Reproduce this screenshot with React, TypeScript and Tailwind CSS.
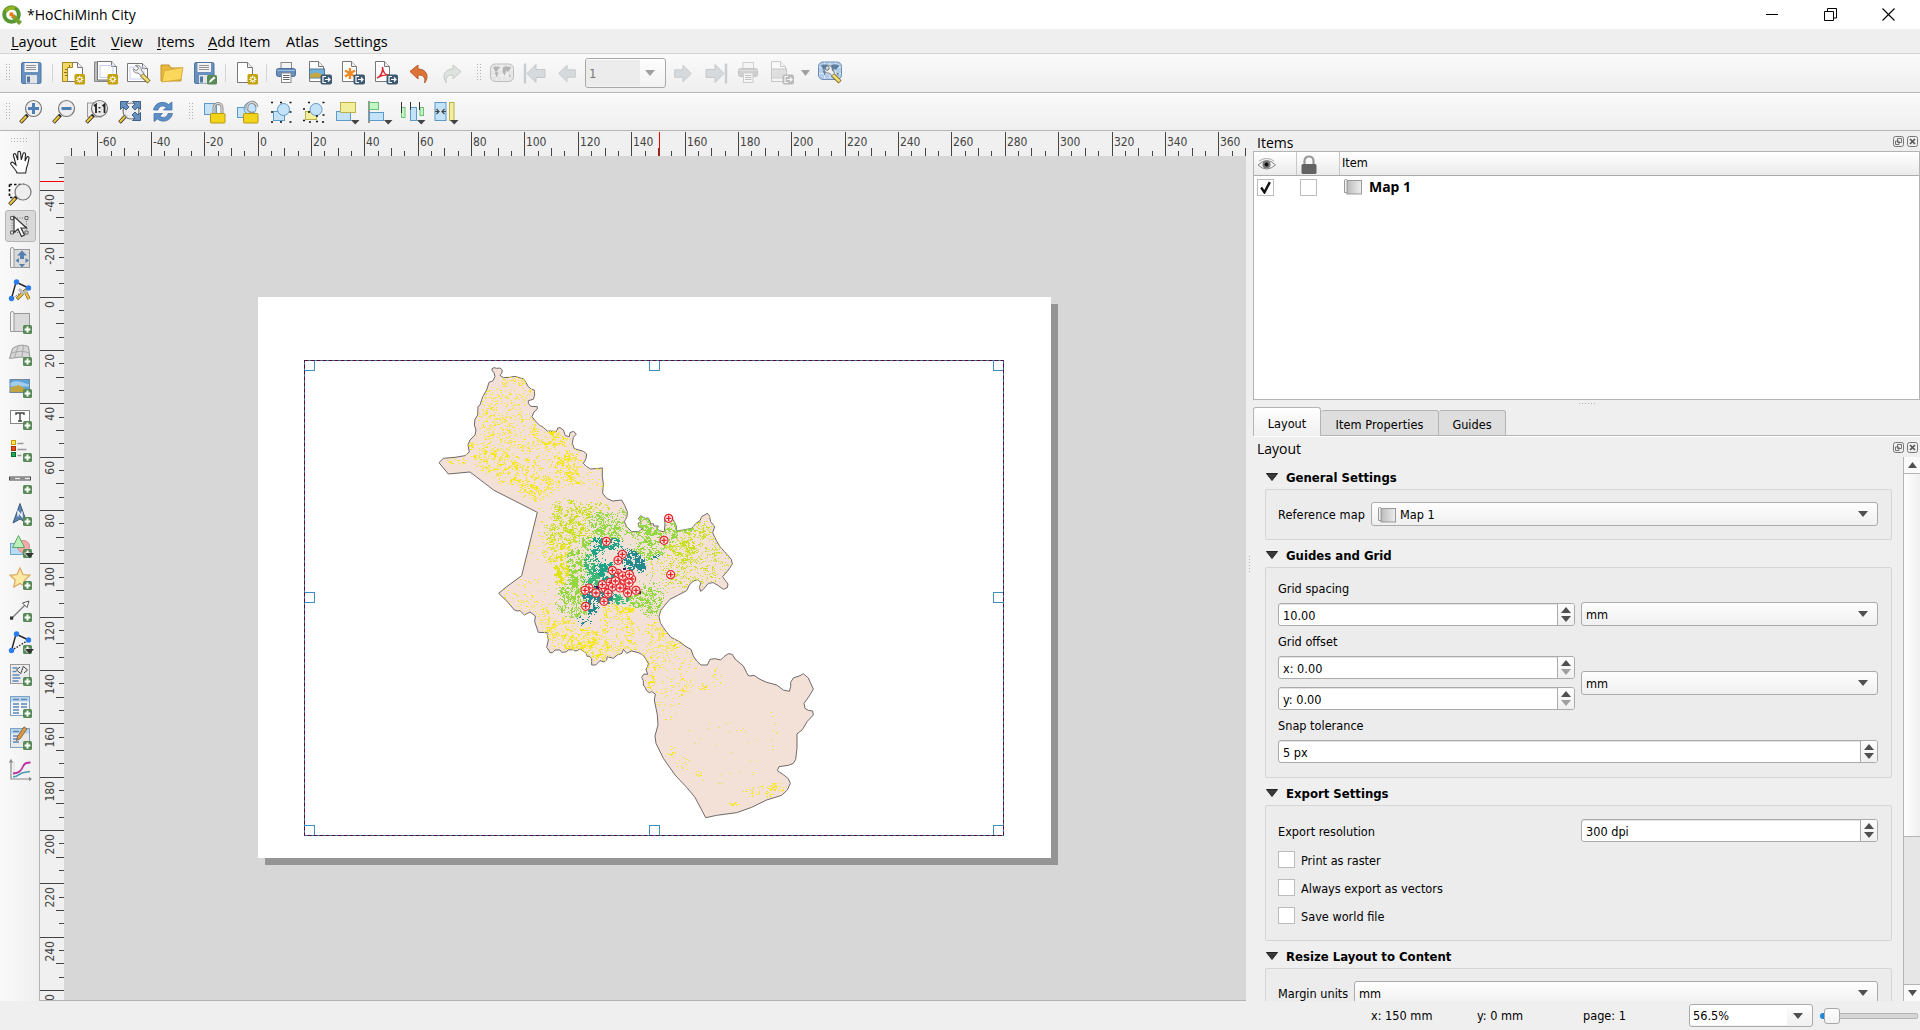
import React from "react";

const UI = "font-['DejaVu_Sans_Condensed','Noto_Sans',sans-serif]";

/* ---------- shared icon pieces ---------- */

function Ico({ children, className = "" }: { children: React.ReactNode; className?: string }) {
  return (
    <svg viewBox="0 0 24 24" className={`h-6 w-6 shrink-0 overflow-visible ${className}`} fill="none">
      {children}
    </svg>
  );
}

const Plus = () => (
  <g>
    <rect x="15" y="15" width="9" height="9" rx="1.6" fill="#578a57" />
    <path d="M19.5 16.6v5.8M16.6 19.5h5.8" stroke="#fff" strokeWidth="2" />
  </g>
);
const PlusDrop = () => (
  <g>
    <Plus />
    <path d="M17 19h9l-4.500 5z" fill="#333" />
  </g>
);
const Star = () => (
  <g>
    <rect x="13.500" y="13" width="10.500" height="10.500" rx="1.500" fill="#c4a20a" />
    <path d="M18.750 14.800v7M15.300 18.300h7M16.300 15.800l5 5M21.300 15.800l-5 5" stroke="#fff" strokeWidth="1.200" />
    <circle cx="18.750" cy="18.300" r="1.300" fill="#c4a20a" />
  </g>
);
const Export = ({ c = "#3c5a72" }: { c?: string }) => (
  <g>
    <rect x="12.500" y="13.500" width="11.500" height="10" rx="2" fill={c} />
    <path d="M18 15.500h-3v6h3M17 18.500h5M20 16.500l2 2-2 2" stroke="#fff" strokeWidth="1.200" />
  </g>
);
const Sheet = ({ x = 1, y = 0.5, w = 14, h = 20, stroke = "#777" }) => (
  <g>
    <path d={`M${x} ${y}h${w - 5}l5 5v${h - 5}h${-w}z`} fill="#fff" stroke={stroke} />
    <path d={`M${x + w - 5} ${y}v5h5`} fill="#eee" stroke={stroke} />
  </g>
);
const Disk = () => (
  <g>
    <rect x="1.500" y="1.500" width="19.500" height="21" rx="1.500" fill="#6790c0" stroke="#5277a0" />
    <rect x="4.500" y="2" width="13.500" height="9" fill="#f2f2f2" />
    <path d="M6 4.500h10M6 6.500h10M6 8.500h10" stroke="#888" strokeWidth=".9" />
    <rect x="6" y="14" width="11" height="8.500" fill="#e4e4e4" />
    <rect x="7" y="15.500" width="3" height="6" fill="#5277a0" />
  </g>
);
const Printer = () => (
  <g>
    <rect x="6" y="1.500" width="10.500" height="7" fill="#f4f4f4" stroke="#888" />
    <rect x="1.500" y="7.500" width="19" height="8" rx="2" fill="#6790c0" stroke="#4f6f94" />
    <path d="M2 9.500h18" stroke="#9bb9da" />
    <rect x="6.500" y="12" width="9.500" height="9.500" fill="#fff" stroke="#888" />
    <path d="M8 14.500h6.500M8 16.500h6.500M8 18.500h6.500" stroke="#666" />
  </g>
);
const Wrench = () => (
  <g>
    <path d="M14.500 13.500L22 21" stroke="#6b5a20" strokeWidth="4.400" />
    <path d="M14.500 13.500L21.600 20.600" stroke="#f0dc6c" strokeWidth="2.800" />
    <path d="M8.500 4.500c2.500-.8 6 .6 5.800 4.500l2.400 3.200-2.700 2.400-3-2.600c-3 .6-5.200-1.800-4.600-4.400l2.600 2 2.300-1.600-.4-2.200z" fill="#eee" stroke="#777" strokeWidth=".9" />
  </g>
);
const Lens = ({ x = 14.5, y = 8.500 }) => (
  <g>
    <path d="M1.500 22.500l7-7.500" stroke="#222" strokeWidth="3.600" />
    <path d="M1.800 22l5.500-5.800" stroke="#f2c83a" strokeWidth="2.200" />
    <circle cx={x} cy={y} r="8" fill="#ececec" fillOpacity=".85" stroke="#777" strokeWidth="1.200" />
  </g>
);
const Scroll = () => (
  <g>
    <rect x="5" y="3.500" width="16.500" height="18" fill="#dadada" stroke="#999" />
    <path d="M2.500 3q0-1.500 1.700-1.500T6 3v18.500H2.500z" fill="#f2f2f2" stroke="#999" />
  </g>
);
const Nodes = ({ dash = false }) => (
  <g>
    <path d="M3.500 20.500L8 4l12.500 6" stroke="#222" strokeWidth="1.400" />
    {dash && <path d="M3.500 20.500L20.500 10" stroke="#222" strokeWidth="1.400" strokeDasharray="1.500 1.500" />}
    <circle cx="3.500" cy="20.500" r="2.700" fill="#2b7bf0" />
    <circle cx="8.500" cy="4" r="2.700" fill="#2b7bf0" />
    <circle cx="20.500" cy="10" r="2.700" fill="#2b7bf0" />
  </g>
);
const World = ({ c = "#b4cdea", land = "#5f7d9f", edge = "#6d8fb5", line = "#e6f0fa" }) => (
  <g>
    <rect x=".5" y="3" width="23" height="17.500" rx="4.500" fill={c} stroke={edge} />
    <path d="M1 8.500h22M1 14.500h22M6.500 3.500v16.500M12 3.500v16.500M17.500 3.500v16.500" stroke={line} strokeWidth=".8" />
    <path d="M3 6.800l2-1.300h3.500l1.500 1-1.700 1.800-.8 1.700-1.500.5 2.300 1.200-.8 2.800-1 2.300-.7-2.600-.8-1.700.7-1.700-1.400-1.800zM12.500 7.300l1.500-1.600 3-.5 4 1-.8 2.200-1.700 1.300-.5 1.800-1.300-1.700-1 .4-.2 1.800-1 2.700-1-2.500-1.300-1.200.5-1.700zM18.700 13.700l1.800.3.500 1.400-1.800.3z" fill={land} />
  </g>
);
const Lock = ({ open = false }) => (
  <g>
    <path d={open ? "M11 9c-1-8 9-9 10-2" : "M11 14V8c0-6 8-6 8 0v6"} stroke="#8b8b8b" strokeWidth="3" />
    <path d={open ? "M11 9c-1-8 9-9 10-2" : "M11 14V8c0-6 8-6 8 0v6"} stroke="#ddd" strokeWidth="1.200" />
    {open && <path d="M11 9c1 3 4 4 7 3" stroke="#999" strokeWidth="1.400" />}
    <rect x="7.500" y="13.500" width="14.500" height="9.500" rx=".8" fill="#f2d41c" stroke="#b79a12" />
  </g>
);
const Drop = () => <path d="M16 20h8.500l-4.250 4.500z" fill="#444" />;

/* ---------- toolbars ---------- */

const fileIcons: React.ReactNode[] = [
  <Disk />,
  "sep",
  <>
    <Sheet x={1.5} y={1.500} w={20} h={19} />
    <path d="M1.500 1.500h10v5h-5v14h-5z" fill="#f3d768" stroke="#a58a22" />
    <path d="M4 8.500h2M3 11.500h3M4 14.500h2M8.500 4v2" stroke="#8d741b" />
    <Star />
  </>,
  <>
    <path d="M.5 1h18v19.500H.5z" fill="#bbb" stroke="#888" />
    <Sheet x={3.5} y={0.500} w={19} h={18.500} />
    <rect x="6" y="4.500" width="13" height="12" stroke="#c5cdf0" />
    <Star />
  </>,
  <>
    <Sheet x={0.5} y={2.500} w={20} h={18} />
    <rect x="3" y="6" width="14" height="12" stroke="#c5cdf0" />
    <Wrench />
  </>,
  <>
    <path d="M1 4h8l2 3h10v13H1z" fill="#e9b93e" stroke="#c0932a" />
    <path d="M2 21l2.500-11.500L23 6.500 21 18.500z" fill="#fbd85c" stroke="#d2a631" strokeWidth=".8" />
  </>,
  <>
    <Disk />
    <rect x="14" y="14" width="10" height="9.500" rx="1.500" fill="#578a57" />
    <path d="M16 22l1-3 4-3.500 1.500 1.500-4 3.500z" fill="#fff" />
  </>,
  "sep",
  <>
    <Sheet x={3.5} y={1.500} w={15} h={20} />
    <Star />
  </>,
  "sep",
  <Printer />,
  <>
    <Sheet x={1.5} y={0.500} w={14} h={20} />
    <rect x="1.500" y="8" width="15" height="9" fill="#6fb0dc" stroke="#56788e" />
    <path d="M2 16.500v-3.500l7-1.500 7 3v2z" fill="#c8a73e" />
    <Export />
  </>,
  <>
    <Sheet x={1.5} y={0.500} w={14} h={20} />
    <path d="M9 7v11M4 9.500l10 6M14 9.500l-10 6" stroke="#ee8a26" strokeWidth="2.400" />
    <Export />
  </>,
  <>
    <Sheet x={1.5} y={0.500} w={14} h={20} />
    <path d="M3 17c4-2 6-6 5.500-11C9 12 12 14 15 14c-4-.5-8 .5-12 3z" stroke="#d8272c" strokeWidth="1.400" />
    <Export />
  </>,
  <path d="M3 10.500L11 4v4c8 0 12 7 6.500 14 1.500-5-1-8.500-6.500-8v4z" fill="#dd7436" stroke="#b9592a" />,
  <path d="M21 10.500L13 4v4C5 8 1 15 6.500 22 5 17 7.500 13.500 13 14v4z" fill="#dfe3e0" stroke="#c4cac6" />,
];

const arrowL = "M3 12.500l9-9v5h9v8h-9v5z";

const zoomIcons: React.ReactNode[] = [
  <>
    <Lens />
    <path d="M14.500 3v11M9 8.500h11" stroke="#4f7fb5" strokeWidth="3" />
  </>,
  <>
    <Lens />
    <path d="M9.500 8.500h10" stroke="#4f7fb5" strokeWidth="3" />
  </>,
  <>
    <rect x="2.500" y="3" width="14" height="14" fill="#eee" stroke="#999" />
    <Lens />
    <path d="M9 6l2-1.500V13M17.500 6l2-1.500V13M14.500 7v1.500M14.500 11v1.500" stroke="#222" strokeWidth="1.800" />
  </>,
  <>
    <Lens x={13} y={11} />
    <path d="M2.500 1.500h8l-2.500 2.500 3 3-3 3-3-3-2.500 2.500zM22.500 1.500h-8l2.500 2.500-3 3 3 3 3-3 2.500 2.500zM22.500 20.500h-8l2.500-2.500-3-3 3-3 3 3 2.500-2.500z" fill="#6790c0" stroke="#3f6185" />
  </>,
  <>
    <path d="M2.500 10C4 2 13 .5 17.500 4.500L21 2v8h-8.500l2.800-2.800C12 5 8 6 7 10z" fill="#5c8ec8" stroke="#3d6ba2" strokeWidth=".7" />
    <path d="M21.500 13.500C20 21.500 11 23 6.500 19L3 21.500v-8h8.500l-2.800 2.800c3.300 2.200 7.300 1.200 8.300-2.800z" fill="#5c8ec8" stroke="#3d6ba2" strokeWidth=".7" />
  </>,
];

const itemIcons: React.ReactNode[] = [
  <>
    <rect x="1.500" y="3.500" width="12" height="11" fill="#c5e3f8" stroke="#5d9ac7" />
    <Lock />
  </>,
  <>
    <rect x="1.500" y="7.500" width="11" height="10" fill="#c5e3f8" stroke="#5d9ac7" />
    <circle cx="14" cy="8.500" r="6" fill="#c5e3f8" stroke="#5d9ac7" />
    <Lock open />
  </>,
  <>
    <rect x="4.500" y="11.500" width="11" height="9" fill="#c5e3f8" stroke="#5d9ac7" />
    <circle cx="14.500" cy="9.500" r="6" fill="#c5e3f8" stroke="#5d9ac7" />
    <path d="M2 2.500h2M11 2.500h2M20.500 2.500h2M2 12h2M20.500 12h2M2 22h2M11 22h2M20.500 22h2" stroke="#111" strokeWidth="1.700" />
  </>,
  <>
    <rect x="3.500" y="11.500" width="11" height="8" fill="#f2ee9c" stroke="#b9b24d" />
    <circle cx="14" cy="9.500" r="6" fill="#c5e3f8" stroke="#5d9ac7" />
    <path d="M6 2.500h2M20.500 2.500h2M1 9h2M6 12h2M20.500 15h2M1 20.500h2M14 16h2M7 22h2M20 22h2M14 21.500h2" stroke="#111" strokeWidth="1.700" />
  </>,
  <>
    <rect x="1.500" y="11.500" width="14" height="9" fill="#c5e3f8" stroke="#5d9ac7" />
    <rect x="5.500" y="2.500" width="15" height="10" fill="#f2ee9c" stroke="#b9b24d" />
    <Drop />
  </>,
  <>
    <path d="M1 1v22" stroke="#333" />
    <rect x="1.500" y="2.500" width="9" height="7" fill="#c4f5c4" stroke="#6dc07a" />
    <rect x="1.500" y="12.500" width="14" height="8" fill="#c5e3f8" stroke="#5d9ac7" />
    <Drop />
  </>,
  <>
    <rect x=".5" y="7.500" width="3.500" height="10" fill="#c4f5c4" stroke="#6dc07a" />
    <rect x="9.500" y="7.500" width="6" height="13" fill="#c5e3f8" stroke="#5d9ac7" />
    <rect x="19" y="7.500" width="3.500" height="8" fill="#c4f5c4" stroke="#6dc07a" />
    <path d="M.5 2v11M9.500 2v8M18.500 2v8" stroke="#333" />
    <Drop />
  </>,
  <>
    <rect x="1" y="2.500" width="11" height="18" fill="#c5e3f8" stroke="#5d9ac7" />
    <rect x="15.500" y="2.500" width="4.500" height="18" fill="#f2ee9c" stroke="#b9b24d" />
    <path d="M1 11.500h3.500M12 11.500h-3.500M2.500 9l2.500 2.500-2.500 2.500M10.500 9L8 11.500l2.500 2.500" stroke="#444" strokeWidth="1.200" />
    <Drop />
  </>,
];

const sideIcons: React.ReactNode[] = [
  <path d="M9 23c-1-3-4-6-6-8.500-1-1.700.8-3 2.200-1.800L8 15 5.500 5.500C5 3.500 7.400 3 8 4.800L9.800 10V2.800c.1-1.900 2.500-1.900 2.700 0l.8 7L15 3.800c.5-1.700 2.700-1.300 2.500.6L17 11l1.700-3.500c.8-1.500 2.700-.7 2.300.9-.8 4.700-1.500 7.200-2.500 9.600l-.8 5z" fill="#fff" stroke="#222" strokeWidth="1.100" />,
  <>
    <path d="M1.500 2.500h15M1.500 2.500v13h10" stroke="#111" strokeWidth="1.700" strokeDasharray="2.500 2" />
    <Lens x={15} y={10} />
  </>,
  <>
    <rect x="4" y="4" width="14.500" height="14.500" stroke="#777" strokeDasharray="1 1.500" />
    <path d="M2.500 2.500h3v3h-3zM17 2.500h3v3h-3zM2.500 17h3v3h-3zM17 17h3v3h-3z" fill="#ddd" stroke="#666" />
    <path d="M6 2.500v16l4-3.500 3.500 7.500 3-1.500-3.500-7h5.500z" fill="#fff" stroke="#333" strokeWidth="1.200" />
  </>,
  <>
    <Scroll />
    <path d="M14 4.500l5 5h-3v3.500h-4V9.500H9zM7.500 14.500l3.500-2.500v5zM21 14.500l-3.500-2.500v5zM11 18h6l-3 3.500z" fill="#5580b0" />
  </>,
  <>
    <Nodes />
    <path d="M5 20l13-9" stroke="#555" strokeDasharray="1.500 1.500" />
    <path d="M9 21l8-8 4 8" stroke="#6b5a20" strokeWidth="3.200" />
    <path d="M9.500 20.500l7.500-7.500 4 8" stroke="#f2c23a" strokeWidth="2" />
    <path d="M11 11l4 4 4-2" stroke="#bbb" strokeWidth="3" />
  </>,
  <>
    <Scroll />
    <Plus />
  </>,
  <>
    <path d="M4.500 6.500Q12 1 20.500 4.500l1.500 12-9-1.500-11.500 1.500z" fill="#d6d6d6" stroke="#999" />
    <path d="M10 4.500l-3.500 11M15.500 3.500l-1.500 11.500M3 11.500q9-4 18.500-.500" stroke="#aaa" />
    <Plus />
  </>,
  <>
    <rect x="2" y="5.500" width="19.500" height="13" fill="#5aa5dd" stroke="#6f8796" />
    <path d="M2.500 9c5-3 8-2 18.500 1.500v2H2.500z" fill="#a4cdea" />
    <path d="M2.500 18V13.500l8-2.500 10.500 6v1z" fill="#c2a53f" />
    <Plus />
  </>,
  <>
    <rect x="2.500" y="4.500" width="19" height="13" fill="#fff" stroke="#888" />
    <path d="M8 9V7h8v2M12 7v8M10 15h4" stroke="#444" strokeWidth="1.400" />
    <Plus />
  </>,
  <>
    <rect x="3.500" y="2.500" width="4" height="4" fill="#fce94f" stroke="#c29b00" />
    <rect x="3.500" y="8.500" width="4" height="4" fill="#e44c1a" stroke="#a73108" />
    <rect x="3.500" y="14.500" width="4" height="4" fill="#26a65b" stroke="#0d6d35" />
    <path d="M9.500 5.500h6M9.500 11.500h9M9.500 17.500h4" stroke="#999" strokeWidth="1.600" />
    <Plus />
  </>,
  <>
    <rect x="1.500" y="7" width="21" height="3" fill="#eee" stroke="#444" />
    <path d="M2 8.500h5M12 8.500h5" stroke="#888" strokeWidth="2" />
    <Plus />
  </>,
  <>
    <path d="M12 1.500L19 21l-7-4-7 4z" fill="#5d83ad" stroke="#3c5a7a" />
    <path d="M10 14.500V9.500l4 5V9.500" stroke="#fff" strokeWidth="1.300" />
    <Plus />
  </>,
  <>
    <rect x="2.500" y="9.500" width="12" height="11" fill="#b9dcf5" stroke="#6ea6cd" />
    <circle cx="15.500" cy="12.500" r="6" fill="#f4aaaa" stroke="#d68484" />
    <path d="M10.500 1.500l6 12h-12z" fill="#b8f2b8" stroke="#5ea367" />
    <PlusDrop />
  </>,
  <>
    <path d="M12 2l3 6.500 7 .8-5.200 4.700 1.400 7L12 17.500 5.800 21l1.400-7L2 9.300l7-.8z" fill="#fbe9a4" stroke="#dba85e" strokeWidth="1.200" />
    <Plus />
  </>,
  <>
    <path d="M4 20L18 6" stroke="#777" strokeWidth="1.300" />
    <path d="M14.500 5l6.500-2-2 6.500z" fill="#fff" stroke="#555" />
    <rect x="2" y="18.500" width="3.200" height="3.200" fill="#333" />
    <Plus />
  </>,
  <>
    <Nodes dash />
    <PlusDrop />
  </>,
  <>
    <rect x="2.500" y="2.500" width="19" height="19" fill="#ececec" stroke="#999" />
    <path d="M4.500 6h5M4.500 9.500h4M4.500 13h7M4.500 16h8M4.500 19h6" stroke="#5b88bb" strokeWidth="1.600" />
    <path d="M12 5L8.500 8l3.500 3M16 5l3.500 3-3.500 3M15.500 4l-3 8" stroke="#444" />
    <Plus />
  </>,
  <>
    <rect x="2.500" y="2.500" width="19" height="19" fill="#f4f4f4" stroke="#7fa3c4" />
    <rect x="3" y="3" width="18" height="4.500" fill="#b7d3ec" />
    <path d="M5 5.500h6M13 5.500h6M5 10h6M13 10h6M5 13h6M13 13h6M5 16h6M5 19h6" stroke="#5b88bb" strokeWidth="1.300" />
    <Plus />
  </>,
  <>
    <rect x="2.500" y="2.500" width="19" height="19" fill="#e9e9e9" stroke="#7fa3c4" />
    <rect x="3" y="3" width="18" height="4.500" fill="#b7d3ec" />
    <path d="M5 5.500h6M5 10h6M5 13h6M5 16h6" stroke="#5b88bb" strokeWidth="1.300" />
    <path d="M8.500 14.500l1-4L16 .8l3 2L12.500 12.500z" fill="#e2963a" stroke="#555" strokeWidth=".7" />
    <Plus />
  </>,
  <>
    <path d="M3 2.500v18.500h20M1.500 4.500L3 2l1.500 2.500M21 19.500l2 1.500-2 1.500" stroke="#888" strokeWidth="1.200" />
    <path d="M6 3.500v16M3 15h18" stroke="#ddd" />
    <path d="M5 15.500c6-.5 8-2.500 10-7 1-3 3-4 7.500-4" stroke="#c0309b" strokeWidth="1.800" />
    <path d="M5 19c6-.5 7-4.500 11-4.500 2 0 3-1 6-1" stroke="#4b9cb5" strokeWidth="1.600" />
  </>,
];

const Slot = ({ children }: { children: React.ReactNode }) => (
  <div className="flex w-[33px] shrink-0 items-center justify-center">
    <Ico>{children}</Ico>
  </div>
);
const Sep = () => (
  <div className="flex w-2 shrink-0 justify-center">
    <div className="h-[18px] w-px bg-[#d4d4d4]" />
  </div>
);
const Grip = ({ horizontal = false }) => (
  <svg className={horizontal ? "h-[5px] w-[18px]" : "h-[18px] w-[5px]"} aria-hidden>
    {Array.from({ length: 6 }, (_, i) =>
      [0, 1].map((j) => (
        <rect key={`${i}${j}`} x={horizontal ? i * 3 : j * 3} y={horizontal ? j * 3 : i * 3} width="1" height="1" fill="#b0b0b0" />
      ))
    )}
  </svg>
);

const barCls = "flex shrink-0 items-center bg-linear-to-b from-[#fafafa] to-[#efefef] border-b border-[#b6b6b6]";

/* ---------- rulers ---------- */

const STEP = 53.37;

function HRuler() {
  const out: React.ReactNode[] = [];
  for (let i = -15; i <= 75; i++) {
    const x = Math.floor(258.1 + (i * STEP) / 4) - 40;
    if (x < 30 || x > 1205) continue;
    const major = i % 4 === 0;
    const mid = i % 2 === 0;
    out.push(<rect key={i} x={x} y={major ? 1 : mid ? 17 : 20} width="1" height={major ? 24 : mid ? 8 : 5} fill="#444" />);
    if (major)
      out.push(
        <text key={`t${i}`} x={x + 2} y="15" fontSize="12" fill="#444" letterSpacing="-.1">
          {i * 5}
        </text>
      );
  }
  return (
    <svg className={`block h-[25px] w-[1206px] shrink-0 bg-[#f0f0f0] ${UI}`}>
      {out}
      <rect x="619" y="1" width="1" height="24" fill="#f00000" />
    </svg>
  );
}

function VRuler() {
  const out: React.ReactNode[] = [];
  for (let i = -10; i <= 52; i++) {
    const y = Math.floor(297.1 + (i * 53.35) / 4) - 156;
    if (y < 0) continue;
    const major = i % 4 === 0;
    const mid = i % 2 === 0;
    out.push(<rect key={i} x={major ? 0 : mid ? 16 : 19} y={y} width={major ? 24 : mid ? 8 : 5} height="1" fill="#444" />);
    if (major)
      out.push(
        <text key={`t${i}`} transform={`translate(14 ${y + 4}) rotate(-90)`} textAnchor="end" fontSize="12" fill="#444">
          {i * 5}
        </text>
      );
  }
  return (
    <svg className={`block h-[844px] w-6 shrink-0 bg-[#f0f0f0] ${UI}`}>
      {out}
      <rect x="0" y="25" width="24" height="1" fill="#f00000" />
    </svg>
  );
}

/* ---------- map: units are thirds of a pixel, origin at (420,350) ---------- */

const outline =
  "216,56 222,53 230,55 240,54 247,60 245,70 240,76 250,83 268,82 285,79 300,84 310,86 318,98 325,110 335,118 343,120 344,135 340,148 325,152 325,160 332,169 352,170 352,177 342,186 336,200 345,212 358,225 370,232 382,243 410,244 413,234 420,233 430,240 436,257 448,260 450,248 460,244 469,252 460,262 457,280 463,296 490,304 500,312 498,326 490,340 500,350 512,357 535,355 547,354 547,380 550,400 548,430 560,445 578,453 605,450 614,466 622,485 621,500 613,515 620,530 635,545 655,545 668,536 656,530 654,520 664,515 655,507 662,497 675,505 685,504 690,514 692,522 700,521 702,528 715,528 712,536 718,542 733,546 735,520 733,505 746,495 760,510 768,525 770,543 790,540 815,535 828,520 840,512 845,500 862,490 868,497 872,515 884,530 878,548 888,570 900,590 918,610 934,628 937,642 925,660 908,680 915,690 924,702 922,713 910,718 895,707 880,698 865,700 850,718 842,724 838,712 843,698 833,689 820,693 808,705 800,722 775,735 750,748 735,765 722,782 717,800 722,820 735,840 753,862 780,876 798,890 813,898 820,918 830,933 843,945 862,945 870,928 885,926 902,930 912,920 925,911 937,913 945,927 970,948 980,968 984,976 990,978 1002,976 1020,988 1040,997 1070,1005 1090,1020 1108,1024 1112,1010 1112,997 1120,984 1140,977 1150,971 1165,984 1173,1002 1180,1017 1168,1038 1152,1060 1155,1075 1165,1081 1178,1083 1180,1095 1162,1114 1147,1139 1131,1152 1131,1195 1127,1228 1120,1240 1105,1246 1077,1250 1072,1262 1090,1274 1105,1286 1111,1300 1102,1320 1085,1336 1040,1350 995,1372 950,1388 890,1396 857,1403 843,1376 825,1342 800,1312 765,1275 730,1225 708,1180 705,1158 714,1125 712,1095 703,1050 706,1032 695,1025 688,1028 680,1022 675,1012 670,1005 670,992 665,982 672,972 683,973 678,958 683,950 685,940 676,925 670,916 655,908 635,903 620,910 610,898 606,910 592,915 580,925 562,920 560,930 552,936 540,932 527,945 515,945 515,925 507,918 502,920 498,908 490,904 480,896 472,902 465,903 460,899 445,900 438,906 425,907 420,900 405,900 398,908 390,908 386,900 380,892 385,870 381,848 355,847 344,815 346,798 330,786 313,795 300,782 292,783 283,780 265,758 236,730 260,710 305,677 352,487 222,421 150,366 85,372 57,338 70,325 105,322 135,317 148,306 144,285 150,270 165,255 168,240 163,225 165,208 173,195 174,170 180,165 188,140 200,120 207,97 218,93 225,80 222,67 216,62";

const Y = "#f5e616", L = "#c9e021", W = "#dfe318", G = "#93d741", E = "#3bb977", T = "#20a386", D = "#238a8d";

type Blob = [number, number, number, number, number, string];
const blobs: Blob[] = [
  [290, 120, 60, 60, 0.24, Y], [230, 190, 70, 90, 0.18, Y], [290, 260, 130, 90, 0.16, Y], [400, 268, 45, 30, 0.5, Y],
  [220, 330, 60, 45, 0.38, Y], [280, 370, 70, 40, 0.38, Y], [350, 410, 65, 45, 0.45, Y], [440, 340, 50, 45, 0.38, Y],
  [465, 390, 30, 35, 0.4, Y], [110, 332, 50, 14, 0.22, Y], [170, 300, 50, 30, 0.25, Y], [520, 390, 50, 60, 0.08, Y],
  [370, 330, 120, 110, 0.12, Y], [450, 480, 60, 45, 0.4, L], [440, 540, 75, 60, 0.45, L], [530, 480, 50, 30, 0.3, L],
  [480, 530, 70, 60, 0.35, L], [350, 560, 60, 90, 0.08, Y], [410, 600, 55, 50, 0.45, W], [425, 660, 28, 60, 0.9, W],
  [330, 740, 90, 60, 0.07, Y], [545, 520, 60, 45, 0.5, G], [600, 540, 60, 45, 0.42, G], [605, 495, 25, 25, 0.35, G],
  [470, 645, 48, 60, 0.85, G], [455, 710, 50, 50, 0.75, G], [460, 770, 60, 40, 0.4, G], [500, 590, 45, 40, 0.5, G],
  [680, 520, 35, 40, 0.8, G], [685, 580, 65, 60, 0.5, G], [740, 550, 50, 50, 0.5, G], [660, 560, 60, 50, 0.35, G],
  [790, 538, 40, 10, 0.7, G], [730, 650, 80, 80, 0.2, L], [690, 735, 45, 70, 0.55, G], [640, 750, 40, 25, 0.6, G],
  [780, 590, 60, 60, 0.5, L], [820, 550, 50, 50, 0.4, L], [860, 580, 70, 100, 0.22, L], [900, 640, 60, 60, 0.15, L],
  [800, 660, 90, 70, 0.2, L], [505, 640, 22, 35, 1, E], [515, 690, 30, 32, 1.3, E], [545, 640, 40, 28, 0.65, T],
  [530, 590, 30, 35, 0.7, T], [575, 580, 45, 22, 0.65, T], [550, 670, 45, 35, 0.75, T], [640, 635, 38, 40, 0.7, D],
  [660, 655, 20, 22, 0.75, D], [702, 612, 22, 20, 0.5, D], [620, 610, 30, 20, 0.4, D], [600, 748, 32, 18, 1, E],
  [560, 742, 40, 22, 0.7, D], [515, 765, 24, 35, 0.7, D], [490, 810, 25, 22, 0.3, D], [525, 735, 50, 22, 0.8, D],
  [430, 850, 65, 60, 0.4, Y], [400, 810, 60, 50, 0.2, Y], [480, 870, 60, 50, 0.42, Y], [540, 900, 60, 40, 0.42, Y],
  [555, 820, 8, 80, 0.6, Y], [600, 775, 50, 22, 0.5, Y], [625, 830, 14, 70, 0.35, Y], [590, 850, 90, 80, 0.12, Y],
  [710, 840, 40, 40, 0.3, Y], [760, 885, 30, 20, 0.35, Y], [700, 920, 50, 50, 0.2, Y], [780, 950, 60, 60, 0.06, Y],
  [690, 995, 20, 25, 0.4, Y], [790, 1010, 30, 40, 0.15, Y], [850, 1010, 25, 12, 0.3, Y], [890, 985, 22, 35, 0.2, Y],
  [745, 1040, 50, 80, 0.07, Y], [745, 1105, 12, 12, 0.3, Y], [755, 1205, 16, 25, 0.25, Y], [790, 1240, 30, 22, 0.12, Y],
  [835, 1270, 15, 15, 0.3, Y], [1072, 1310, 26, 16, 0.45, Y], [1020, 1325, 55, 22, 0.2, Y], [940, 1360, 18, 8, 0.5, Y],
  [1060, 1130, 14, 80, 0.05, Y], [900, 1200, 150, 120, 0.008, Y],
];
const voids: [number, number, number, number, number][] = [
  [558, 618, 30, 20, 0.12], [628, 578, 28, 16, 0.1], [690, 680, 30, 24, 0.35], [480, 425, 60, 26, 0.12],
];

function hash(x: number, y: number) {
  let n = (Math.imul(x, 374761393) + Math.imul(y, 668265263)) | 0;
  n = Math.imul(n ^ (n >>> 13), 1274126177);
  n ^= n >>> 16;
  n = Math.imul(n, 2246822519);
  return ((n ^ (n >>> 15)) >>> 0) / 4294967296;
}
function noise(x: number, y: number, s: number) {
  const gx = Math.floor(x / s), gy = Math.floor(y / s);
  const fx = x / s - gx, fy = y / s - gy;
  const a = hash(gx + 901, gy + 77), b = hash(gx + 902, gy + 77), c = hash(gx + 901, gy + 78), d = hash(gx + 902, gy + 78);
  return (a * (1 - fx) + b * fx) * (1 - fy) + (c * (1 - fx) + d * fx) * fy;
}
const population = (() => {
  const paths: Record<string, string> = {};
  for (let y = 10; y < 465; y++)
    for (let x = 18; x < 395; x++) {
      const u = x * 3, v = y * 3;
      let p = 0, best = 0, col = Y;
      for (const b of blobs) {
        const d = ((u - b[0]) / b[2]) ** 2 + ((v - b[1]) / b[3]) ** 2;
        if (d >= 1) continue;
        const k = b[4] * Math.min(1, 1.8 * (1 - d));
        p = Math.max(p, k) + Math.min(p, k) * 0.25;
        if (k > best) { best = k; col = b[5]; }
      }
      if (!p) continue;
      for (const o of voids) {
        const d = ((u - o[0]) / o[2]) ** 2 + ((v - o[1]) / o[3]) ** 2;
        if (d < 1) p *= o[4];
      }
      const n = noise(x, y, 2.2) * 0.7 + noise(x + 300, y, 6) * 0.3;
      const clump = n > 0.55 ? 1.7 : n > 0.44 ? 0.8 : 0.25;
      if (hash(x, y) < p * clump * 0.8) paths[col] = (paths[col] || "") + `M${x} ${y}h1v1h-1z`;
    }
  return Object.entries(paths);
})();

const hospitals = [
  [746, 505], [732, 571], [752, 674], [559, 574], [607, 613], [594, 631], [594, 670], [570, 697], [612, 690], [635, 687],
  [590, 705], [617, 716], [555, 715], [608, 678], [628, 673], [577, 661], [507, 714], [495, 721], [528, 729], [547, 704], [577, 711],
  [586, 693], [627, 699], [564, 730], [552, 754], [497, 769], [623, 729], [648, 721], [600, 714],
];

function MapItem() {
  return (
    <svg className="absolute left-[356px] top-[194px] h-[480px] w-[420px] overflow-visible">
      <defs>
        <clipPath id="city">
          <polygon points={outline} transform="scale(.33333)" />
        </clipPath>
      </defs>
      <polygon points={outline} transform="scale(.33333)" fill="#f3e1d8" stroke="#6f6867" strokeWidth="3" strokeLinejoin="round" />
      <g clipPath="url(#city)" shapeRendering="crispEdges">
        {population.map(([c, d]) => (
          <path key={c} d={d} fill={c} />
        ))}
        <path d="M174 236h4v1h-4zM176 237h3v2h-3zM218 241h3v3h-3zM203 218h3v2h-3z" fill="#440f5c" />
      </g>
      {hospitals.map(([x, y], i) => (
        <g key={i} transform={`translate(${x / 3} ${y / 3})`}>
          <circle r="4" fill="#fdeceb" stroke="#e4262b" strokeWidth="1.200" />
          <path d="M-2.600 0h5.200M0-2.600v5.200" stroke="#e4262b" strokeWidth="1.400" />
        </g>
      ))}
    </svg>
  );
}

function Selection() {
  const hs = [
    [0, 0], [345, 0], [689, 0], [0, 232], [689, 232], [0, 465], [345, 465], [689, 465],
  ];
  return (
    <svg className="absolute left-60 top-[204px] h-[476px] w-[700px]">
      {hs.map(([x, y], i) => (
        <rect key={i} x={x + 0.5} y={y + 0.5} width="10" height="10" fill="#fff" stroke="#3f8fc0" />
      ))}
      <rect x=".5" y=".5" width="699" height="475" fill="none" stroke="#3288bd" />
      <rect x=".5" y=".5" width="699" height="475" fill="none" stroke="#5a0a35" strokeDasharray="4 2" />
    </svg>
  );
}

/* ---------- panel widgets ---------- */

const Tri = ({ up = false, dim = false, w = 10 }) => (
  <svg viewBox="0 0 10 6" style={{ width: w }} className="block h-[6px]" preserveAspectRatio="none">
    <path d={up ? "M5 0l5 6H0z" : "M0 0h10L5 6z"} fill={dim ? "#a0a0a0" : "#505050"} />
  </svg>
);

function Combo({ children, className = "" }: { children: React.ReactNode; className?: string }) {
  return (
    <div className={`flex h-6 shrink-0 items-center justify-between rounded-[3px] border border-[#ababab] bg-linear-to-b from-[#fefefe] to-[#f0f0f0] pl-1 pr-[9px] ${className}`}>
      <span className="flex items-center gap-1 pt-[2px]">{children}</span>
      <Tri />
    </div>
  );
}
function Spin({ children, className = "", dim = false }: { children: React.ReactNode; className?: string; dim?: boolean }) {
  return (
    <div className={`flex h-[23px] shrink-0 items-stretch overflow-hidden rounded-[3px] border border-[#ababab] bg-white shadow-[inset_0_1px_0_#e4e4e4] ${className}`}>
      <span className="flex flex-1 items-center pl-1 pt-[3px]">{children}</span>
      <span className="flex w-[17px] flex-col items-center justify-center gap-[3px] border-l border-[#ababab] bg-linear-to-b from-[#fdfdfd] to-[#f0f0f0]">
        <Tri up />
        <Tri dim={dim} />
      </span>
    </div>
  );
}
const Box = ({ checked = false }) => (
  <span className="flex h-[17px] w-[17px] shrink-0 items-center justify-center border border-[#bcbcbc] bg-white">
    {checked && (
      <svg viewBox="0 0 12 12" className="h-[13px] w-[13px]" fill="none">
        <path d="M2 6l3 4.500L10 1" stroke="#111" strokeWidth="2.200" />
      </svg>
    )}
  </span>
);
const Check = ({ children }: { children: React.ReactNode }) => (
  <div className="flex h-[17px] items-center gap-[6px]">
    <Box />
    <span className="pt-[3px]">{children}</span>
  </div>
);
const GroupTitle = ({ children }: { children: React.ReactNode }) => (
  <div className="flex h-5 shrink-0 items-center gap-2 pl-px text-[13px] font-bold">
    <svg viewBox="0 0 12 8" className="h-2 w-3">
      <path d="M.5.5h11L6 7.500z" fill="#3a3a3a" stroke="#222" />
    </svg>
    {children}
  </div>
);
const groupCls = "rounded-xs border border-[#d5d5d5] bg-[#ececec] pl-3 pr-[13px]";

const DockTitle = ({ children }: { children: React.ReactNode }) => (
  <div className="flex h-5 shrink-0 items-center justify-between pl-1 pr-[2px]">
    <span className="pt-1 font-['Open_Sans',sans-serif] text-[14px]">{children}</span>
    <span className="flex gap-[3px]">
      <svg viewBox="0 0 11 11" className="h-[11px] w-[11px]" fill="none">
        <rect x=".5" y=".5" width="10" height="10" rx="2" stroke="#777" />
        <path d="M4.500 2.500h4v4h-4zM2.500 5h3.500v3.500H2.500z" fill="#efefef" stroke="#666" strokeWidth=".9" />
      </svg>
      <svg viewBox="0 0 11 11" className="h-[11px] w-[11px]" fill="none">
        <rect x=".5" y=".5" width="10" height="10" rx="2" stroke="#777" />
        <path d="M3 3l5 5M8 3L3 8" stroke="#555" strokeWidth="1.700" />
      </svg>
    </span>
  </div>
);

const MapGlyph = () => (
  <svg viewBox="0 0 18 16" className="h-4 w-[18px]">
    <defs>
      <linearGradient id="mg">
        <stop offset="0" stopColor="#bbb" />
        <stop offset="1" stopColor="#eee" />
      </linearGradient>
    </defs>
    <rect x="3" y="1.500" width="14.500" height="13.500" fill="url(#mg)" stroke="#999" />
    <path d="M.5 1.500q0-1 1.300-1t1.300 1v12H.5z" fill="#eee" stroke="#999" />
  </svg>
);

const menus: [string, string, string][] = [
  ["L", "ayout", "w-[59px]"], ["E", "dit", "w-[41px]"], ["V", "iew", "w-[46px]"], ["I", "tems", "w-[51px]"],
  ["A", "dd Item", "w-[78px] tracking-[0.15px]"], ["", "Atlas", "w-12"], ["", "Settings", "w-20"],
];

export default function App() {
  return (
    <div className={`flex h-[1030px] w-[1920px] flex-col overflow-hidden bg-[#efefef] text-[12.6px] leading-none whitespace-nowrap text-black ${UI}`}>
      {/* title bar */}
      <div className="flex h-[29px] shrink-0 items-center bg-white pl-[2px] font-['Open_Sans',sans-serif]">
        <svg viewBox="0 0 20 20" className="h-5 w-5" fill="none">
          <circle cx="9.500" cy="9.500" r="7.300" stroke="#589632" strokeWidth="4" />
          <path d="M4 6.500a7 7 0 0 1 9-3" stroke="#93b023" strokeWidth="3.500" />
          <path d="M10.500 10.500l8 8" stroke="#6fa22e" strokeWidth="4.400" />
          <path d="M7.500 7.500h4l-.5 2 2.500 2.500-1.500 1.500-2.500-2.500-2 .5z" fill="#ee7913" />
        </svg>
        <span className="pl-[5px] text-[14px]">*HoChiMinh City</span>
        <div className="ml-auto flex items-center gap-[45px] pr-[25px]">
          <svg className="h-[14px] w-[13px]"><path d="M0 6.500h12" stroke="#000" /></svg>
          <svg className="h-[14px] w-[13px]" fill="none"><path d="M.5 3.500h9v9h-9zM3.500 3V.5h9v9.500h-3" stroke="#000" /></svg>
          <svg className="h-[14px] w-[13px]" fill="none"><path d="M.5 .5l12 12M12.500 .5l-12 12" stroke="#000" strokeWidth="1.100" /></svg>
        </div>
      </div>

      {/* menu bar */}
      <div className="flex h-[25px] shrink-0 items-center border-b border-[#d3d3d3] pl-[11px] pt-[2px] font-['Open_Sans',sans-serif] text-[14.500px]">
        {menus.map(([u, rest, w]) => (
          <span key={rest} className={`shrink-0 ${w}`}>
            <span className="underline underline-offset-2">{u}</span>
            {rest}
          </span>
        ))}
      </div>

      {/* toolbars */}
      <div className={`${barCls} h-[39px]`}>
        <div className="w-[15px] pl-[6px]"><Grip /></div>
        {fileIcons.map((n, i) => (n === "sep" ? <Sep key={i} /> : <Slot key={i}>{n}</Slot>))}
        <div className="w-[17px] pl-[9px]"><Grip /></div>
        <div className="flex opacity-60"><Slot><World c="#dcdcdc" land="#8a8a8a" edge="#9a9a9a" line="#f6f6f6" /></Slot></div>
        <Slot><path d="M2 2.500v20" stroke="#c9cdd0" strokeWidth="2.500" /><path d={arrowL} transform="translate(1 0)" fill="#d6dadd" stroke="#c3c8cb" /></Slot>
        <Slot><path d={arrowL} transform="translate(0 1) scale(.92)" fill="#d6dadd" stroke="#c3c8cb" /></Slot>
        <div className="ml-px flex h-[30px] w-[81px] items-center justify-between rounded-[3px] border border-[#a8a8a8] bg-linear-to-b from-[#fdfdfd] to-[#f2f2f2]">
          <div className="flex h-[26px] w-[54px] items-center bg-[#ececec] pl-[3px] text-[13px] text-[#777]">1</div>
          <div className="pr-[10px]"><Tri dim /></div>
        </div>
        <Slot><path d={arrowL} transform="translate(23 1) scale(-.92 .92)" fill="#d6dadd" stroke="#c3c8cb" /></Slot>
        <Slot><path d="M22 2.500v20" stroke="#c9cdd0" strokeWidth="2.500" /><path d={arrowL} transform="translate(23 0) scale(-1 1)" fill="#d6dadd" stroke="#c3c8cb" /></Slot>
        <div className="flex opacity-35 grayscale"><Slot><Printer /></Slot></div>
        <div className="flex opacity-35 grayscale">
          <Slot>
            <Sheet x={1.5} y={0.500} w={14} h={20} />
            <rect x="1.500" y="8" width="15" height="9" fill="#9fc0d8" stroke="#56788e" />
            <path d="M2 16.500v-3.500l7-1.500 7 3v2z" fill="#c8b77e" />
            <Export />
          </Slot>
        </div>
        <div className="flex w-[15px] justify-center"><Tri dim w={9} /></div>
        <Slot>
          <g transform="translate(0 -2)">
            <World />
          </g>
          <Wrench />
        </Slot>
      </div>
      <div className={`${barCls} h-[38px]`}>
        <div className="w-[14px] pl-[6px]"><Grip /></div>
        {zoomIcons.map((n, i) => <Slot key={i}>{n}</Slot>)}
        <div className="w-[19px] pl-[10px]"><Grip /></div>
        {itemIcons.map((n, i) => <Slot key={i}>{n}</Slot>)}
      </div>

      {/* workspace */}
      <div className="flex h-[870px] shrink-0">
        <div className="flex w-[39px] shrink-0 flex-col items-center bg-linear-to-r from-[#fafafa] to-[#efefef] pt-[7px]">
          <Grip horizontal />
          <div className="flex flex-col items-center pt-[3px] pl-px">
            {sideIcons.map((n, i) => (
              <div key={i} className={`flex h-[32px] w-[31px] items-center justify-center ${i === 2 ? "rounded-[3px] border border-[#b5b5b5] bg-[#d9d9d9]" : ""}`}>
                <Ico>{n}</Ico>
              </div>
            ))}
          </div>
        </div>

        <div className="flex w-[1207px] shrink-0 flex-col border-b border-l border-[#b4b4b4]">
          <HRuler />
          <div className="flex">
            <VRuler />
            <div className="relative h-[844px] w-[1182px] overflow-hidden bg-[#d7d7d7]">
              <div className="absolute left-[201px] top-[148px] h-[561px] w-[793px] bg-[#959595]" />
              <div className="absolute left-[194px] top-[141px] h-[561px] w-[793px] bg-white" />
              <MapItem />
              <Selection />
            </div>
          </div>
        </div>

        <div className="flex w-[7px] shrink-0 items-center justify-center pb-[4px]">
          <svg className="h-4 w-px"><path d="M.5 0v16" stroke="#b0b0b0" strokeDasharray="1 2" /></svg>
        </div>

        {/* docks */}
        <div className="flex w-[667px] shrink-0 flex-col overflow-hidden">
          <DockTitle>Items</DockTitle>
          <div className="h-[249px] shrink-0 border border-[#b4b4b4] bg-white">
            <div className="flex h-6 items-stretch border-b border-[#ababab] bg-linear-to-b from-white to-[#ebebeb]">
              <div className="flex w-[43px] items-center border-r border-[#c8c8c8] pl-[3px]">
                <svg viewBox="0 0 20 14" className="h-[14px] w-5" fill="none">
                  <path d="M1 8q9-9 17.500 0-9 8-17.500 0z" fill="#f2f2f2" stroke="#888" />
                  <path d="M2 4q8-5 15 0" stroke="#aaa" />
                  <circle cx="9.500" cy="7.500" r="4" fill="#777" />
                  <circle cx="9.500" cy="7.500" r="1.900" fill="#111" />
                </svg>
              </div>
              <div className="flex w-[43px] items-center border-r border-[#c8c8c8] pl-1 pt-[2px]">
                <svg viewBox="0 0 16 19" className="h-[19px] w-4" fill="none">
                  <path d="M3.500 10V6c0-6 9-6 9 0v4" stroke="#999" strokeWidth="2.200" />
                  <rect x=".5" y="9" width="15" height="10" rx="1.500" fill="#636363" />
                </svg>
              </div>
              <div className="flex items-center pl-[2px]">Item</div>
            </div>
            <div className="flex h-[22px] items-center pl-[3px]">
              <Box checked />
              <div className="w-[26px]" />
              <Box />
              <div className="w-[27px]" />
              <MapGlyph />
              <span className="pl-[7px] font-['Noto_Sans',sans-serif] text-[14px] font-bold">Map 1</span>
            </div>
          </div>
          <div className="flex h-[7px] shrink-0 items-center justify-center">
            <svg className="h-px w-4"><path d="M0 .5h16" stroke="#b0b0b0" strokeDasharray="1 2" /></svg>
          </div>

          {/* tabs */}
          <div className="flex h-[30px] shrink-0 items-end border-b border-white">
            <div className="flex h-[29px] w-[68px] items-center justify-center rounded-t-[3px] border border-b-0 border-[#b4b4b4] bg-linear-to-b from-white to-[#f0f0f0] pt-[4px]">Layout</div>
            <div className="flex h-[26px] w-[118px] items-center justify-center rounded-t-[3px] border border-l-0 border-[#b4b4b4] bg-[#dedede] pt-[4px] tracking-[0.1px]">Item Properties</div>
            <div className="flex h-[26px] w-[67px] items-center justify-center rounded-t-[3px] border border-l-0 border-[#b4b4b4] bg-[#dedede] pt-[4px]">Guides</div>
            <div className="flex-1 border-b border-[#b4b4b4]" />
          </div>
          <DockTitle>Layout</DockTitle>

          <div className="flex min-h-0 flex-1">
            <div className="flex w-[650px] flex-col overflow-hidden pl-3 pr-[11px] pt-[10px]">
              <GroupTitle>General Settings</GroupTitle>
              <div className={`${groupCls} mt-[2px] flex h-[51px] shrink-0 items-center gap-1.5 pb-px`}>
                <span className="w-[87px] pt-[2px] tracking-[0.1px]">Reference map</span>
                <Combo className="flex-1 pl-[6px]"><MapGlyph /><span>Map 1</span></Combo>
              </div>

              <div className="h-[5px] shrink-0" />
              <GroupTitle>Guides and Grid</GroupTitle>
              <div className={`${groupCls} mt-[2px] flex h-[211px] shrink-0 flex-col`}>
                <div className="flex h-[34px] items-center pt-2">Grid spacing</div>
                <div className="flex gap-[6px]">
                  <Spin className="mt-px w-[297px]">10.00</Spin>
                  <Combo className="w-[297px]">mm</Combo>
                </div>
                <div className="flex h-[30px] items-center pt-[2px]">Grid offset</div>
                <div className="flex items-center gap-[6px]">
                  <div className="flex flex-col gap-2">
                    <Spin dim className="w-[297px]">x: 0.00</Spin>
                    <Spin dim className="w-[297px]">y: 0.00</Spin>
                  </div>
                  <Combo className="w-[297px]">mm</Combo>
                </div>
                <div className="flex h-[30px] items-center pt-[2px]">Snap tolerance</div>
                <Spin className="w-full">5 px</Spin>
              </div>

              <div className="h-[5px] shrink-0" />
              <GroupTitle>Export Settings</GroupTitle>
              <div className={`${groupCls} mt-[2px] flex h-[136px] shrink-0 flex-col pt-[13px]`}>
                <div className="flex items-center justify-between">
                  <span className="pt-[3px]">Export resolution</span>
                  <Spin className="w-[297px]">300 dpi</Spin>
                </div>
                <div className="flex flex-col gap-[11px] pt-[9px]">
                  <Check>Print as raster</Check>
                  <Check>Always export as vectors</Check>
                  <Check>Save world file</Check>
                </div>
              </div>

              <div className="h-[5px] shrink-0" />
              <GroupTitle>Resize Layout to Content</GroupTitle>
              <div className={`${groupCls} mt-[2px] flex h-[60px] shrink-0 items-start gap-[6px] pt-3`}>
                <span className="w-[70px] pt-[7px]">Margin units</span>
                <Combo className="flex-1">mm</Combo>
              </div>
            </div>

            {/* scroll bar */}
            <div className="flex w-[17px] shrink-0 flex-col border-l border-[#b4b4b4] bg-[#e6e6e6]">
              <div className="flex h-[17px] items-center justify-center border-b border-[#b4b4b4] bg-[#fafafa]"><Tri up w={9} /></div>
              <div className="h-[363px] border-b border-[#b4b4b4] bg-linear-to-r from-[#fefefe] to-[#f0f0f0]" />
              <div className="flex-1" />
              <div className="flex h-[17px] items-center justify-center border-t border-[#b4b4b4] bg-[#fafafa]"><Tri w={9} /></div>
            </div>
          </div>
        </div>
      </div>

      {/* status bar */}
      <div className="flex h-[29px] shrink-0 items-center pl-[1371px]">
        <span className="w-[106px] pt-[2px]">x: 150 mm</span>
        <span className="w-[106px] pt-[2px]">y: 0 mm</span>
        <span className="w-[106px] pt-[2px]">page: 1</span>
        <div className="flex h-[23px] w-[124px] items-center justify-between rounded-[3px] border border-[#ababab] bg-linear-to-b from-[#fefefe] to-[#f0f0f0]">
          <div className="flex h-[19px] w-[97px] items-center bg-white pl-[3px] pt-[2px]">56.5%</div>
          <div className="pr-[9px]"><Tri /></div>
        </div>
        <div className="ml-[7px] flex items-center">
          <div className="h-[6px] w-[4px] rounded-l-[3px] bg-[#1e86d6]" />
          <div className="h-4 w-4 rounded-[3px] border border-[#a8a8a8] bg-linear-to-b from-white to-[#f2f2f2]" />
          <div className="h-[6px] w-[78px] rounded-r-[2px] border border-l-0 border-[#b4b4b4] bg-[#d6d6d6]" />
        </div>
      </div>
    </div>
  );
}
